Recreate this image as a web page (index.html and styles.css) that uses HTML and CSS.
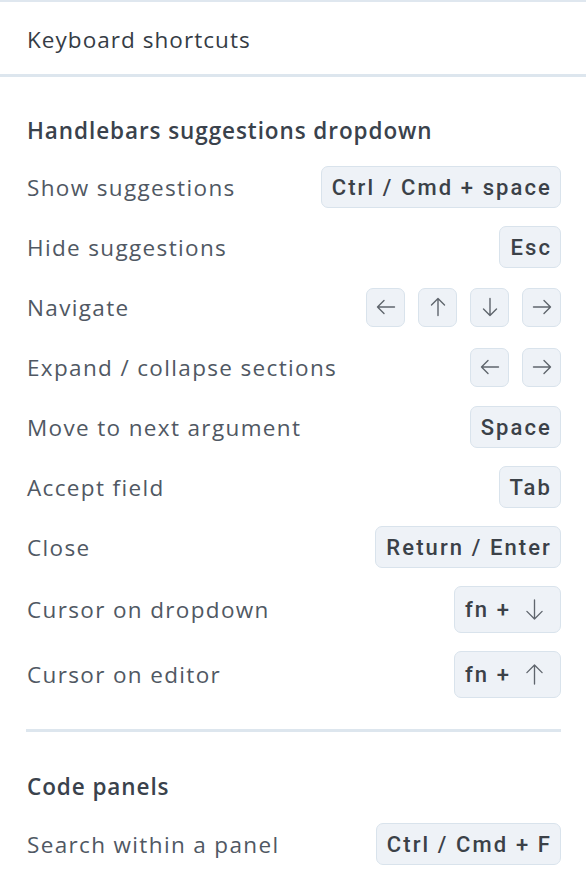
FILE: index.html
```html
<!DOCTYPE html>
<html>
<head>
<meta charset="utf-8">
<link rel="stylesheet" href="styles.css">
</head>
<body>
<div class="panel">
  <div class="header">Keyboard shortcuts</div>
  <div class="body">
    <section class="section">
      <h3 class="section-title">Handlebars suggestions dropdown</h3>
      <div class="rows">
        <div class="row"><span class="label">Show suggestions</span><span class="keys"><kbd class="key">Ctrl / Cmd + space</kbd></span></div>
        <div class="row"><span class="label">Hide suggestions</span><span class="keys"><kbd class="key">Esc</kbd></span></div>
        <div class="row"><span class="label">Navigate</span><span class="keys">
          <kbd class="key arrow"><svg viewBox="0 0 24 24" class="ico"><path d="M20.5 12H3.5M10 5.5L3.5 12l6.5 6.5"/></svg></kbd>
          <kbd class="key arrow"><svg viewBox="0 0 24 24" class="ico"><path d="M12 20.5V3.5M5.5 10L12 3.5l6.5 6.5"/></svg></kbd>
          <kbd class="key arrow"><svg viewBox="0 0 24 24" class="ico"><path d="M12 3.5v17M5.5 14l6.5 6.5 6.5-6.5"/></svg></kbd>
          <kbd class="key arrow"><svg viewBox="0 0 24 24" class="ico"><path d="M3.5 12h17M14 5.5l6.5 6.5-6.5 6.5"/></svg></kbd>
        </span></div>
        <div class="row"><span class="label">Expand / collapse sections</span><span class="keys">
          <kbd class="key arrow"><svg viewBox="0 0 24 24" class="ico"><path d="M20.5 12H3.5M10 5.5L3.5 12l6.5 6.5"/></svg></kbd>
          <kbd class="key arrow"><svg viewBox="0 0 24 24" class="ico"><path d="M3.5 12h17M14 5.5l6.5 6.5-6.5 6.5"/></svg></kbd>
        </span></div>
        <div class="row"><span class="label">Move to next argument</span><span class="keys"><kbd class="key">Space</kbd></span></div>
        <div class="row"><span class="label">Accept field</span><span class="keys"><kbd class="key">Tab</kbd></span></div>
        <div class="row"><span class="label">Close</span><span class="keys"><kbd class="key">Return / Enter</kbd></span></div>
        <div class="row"><span class="label">Cursor on dropdown</span><span class="keys"><kbd class="key tall">fn +<svg viewBox="0 0 20 24" class="ico big"><path d="M10 2v20M2 14l8 8 8-8"/></svg></kbd></span></div>
        <div class="row"><span class="label">Cursor on editor</span><span class="keys"><kbd class="key tall">fn +<svg viewBox="0 0 20 24" class="ico big"><path d="M10 22V2M2 10l8-8 8 8"/></svg></kbd></span></div>
      </div>
    </section>
    <hr class="divider">
    <section class="section">
      <h3 class="section-title">Code panels</h3>
      <div class="rows">
        <div class="row"><span class="label">Search within a panel</span><span class="keys"><kbd class="key">Ctrl / Cmd + F</kbd></span></div>
      </div>
    </section>
  </div>
</div>
</body>
</html>
```

FILE: styles.css
```css
html, body {
  margin: 0;
  padding: 0;
  background: #ffffff;
}
.panel {
  width: 586px;
  border-top: 2px solid #dfe7ef;
  font-family: "Open Sans", "Noto Sans", sans-serif;
}
.header {
  height: 75px;
  box-sizing: border-box;
  padding: 2px 27px 0;
  display: flex;
  align-items: center;
  font-size: 22.5px;
  font-weight: 500;
  color: #353c45;
  letter-spacing: 1.05px;
  border-bottom: 3px solid #dde6ee;
}
.body {
  padding: 39px 25px 0 27px;
}
.section-title {
  margin: 0;
  font-size: 22.5px;
  font-weight: 600;
  color: #3a424c;
  letter-spacing: 0.92px;
  line-height: 30px;
}
.rows {
  margin-top: 20px;
  display: flex;
  flex-direction: column;
  gap: 18px;
}
.row {
  display: flex;
  align-items: center;
  justify-content: space-between;
  min-height: 42px;
}
.label {
  font-size: 22.5px;
  color: #505863;
  letter-spacing: 1.35px;
}
.keys {
  display: flex;
  gap: 13px;
}
.key {
  font-family: "Roboto", "Inter", sans-serif;
  font-weight: 500;
  font-size: 22px;
  color: #3b4148;
  letter-spacing: 2.1px;
  background: #eef2f7;
  border: 1.5px solid #d9e3ec;
  border-radius: 7px;
  height: 42px;
  box-sizing: border-box;
  padding: 0 8px 0 10px;
  display: inline-flex;
  align-items: center;
  gap: 14px;
}
.key.arrow {
  width: 39px;
  height: 39px;
  padding: 0;
  justify-content: center;
}
.key.tall {
  height: 47px;
  padding-right: 16px;
}
.ico {
  width: 24px;
  height: 24px;
  fill: none;
  stroke: #5f656d;
  stroke-width: 1.4;
  stroke-linecap: round;
  stroke-linejoin: round;
}
.ico.big {
  width: 19px;
  height: 23px;
}
.divider {
  border: 0;
  height: 3px;
  background: #dde6ee;
  margin: 31px 0 0 -1px;
}
.section + .divider + .section {
  padding-top: 40px;
}
.section + .divider + .section .rows {
  margin-top: 21px;
}
```
